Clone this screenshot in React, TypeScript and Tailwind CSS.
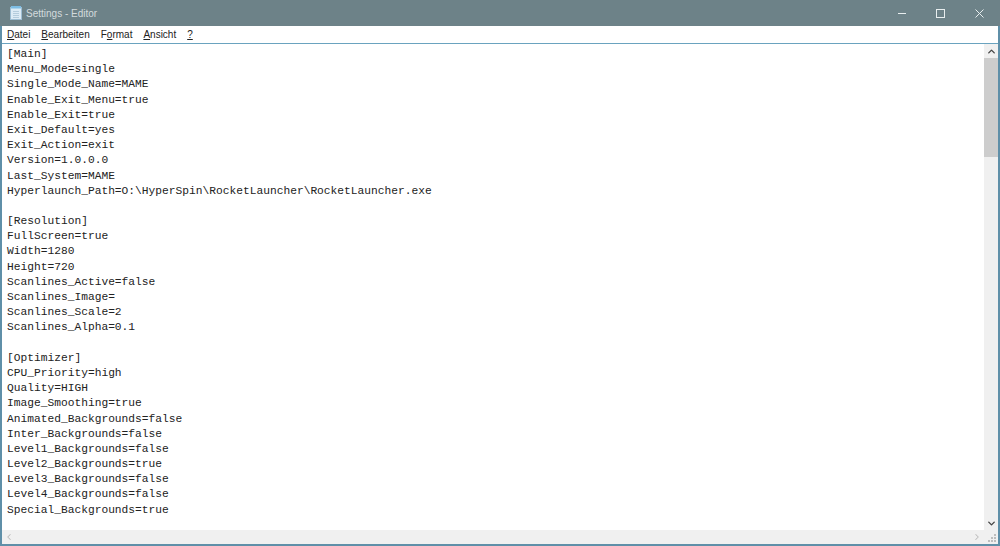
import { ChevronUp, ChevronDown, ChevronLeft, ChevronRight } from "lucide-react";

const lines = [
  "[Main]",
  "Menu_Mode=single",
  "Single_Mode_Name=MAME",
  "Enable_Exit_Menu=true",
  "Enable_Exit=true",
  "Exit_Default=yes",
  "Exit_Action=exit",
  "Version=1.0.0.0",
  "Last_System=MAME",
  "Hyperlaunch_Path=O:\\HyperSpin\\RocketLauncher\\RocketLauncher.exe",
  "",
  "[Resolution]",
  "FullScreen=true",
  "Width=1280",
  "Height=720",
  "Scanlines_Active=false",
  "Scanlines_Image=",
  "Scanlines_Scale=2",
  "Scanlines_Alpha=0.1",
  "",
  "[Optimizer]",
  "CPU_Priority=high",
  "Quality=HIGH",
  "Image_Smoothing=true",
  "Animated_Backgrounds=false",
  "Inter_Backgrounds=false",
  "Level1_Backgrounds=false",
  "Level2_Backgrounds=true",
  "Level3_Backgrounds=false",
  "Level4_Backgrounds=false",
  "Special_Backgrounds=true",
];

const menus = [
  { key: "D", rest: "atei", pre: "" },
  { key: "B", rest: "earbeiten", pre: "" },
  { key: "o", rest: "rmat", pre: "F" },
  { key: "A", rest: "nsicht", pre: "" },
  { key: "?", rest: "", pre: "" },
];

function NotepadIcon() {
  return (
    <svg width="16" height="16" viewBox="0 0 16 16" className="shrink-0">
      <rect x="2.5" y="2.5" width="11" height="12" fill="#dcebf5" stroke="#9dbdd2" strokeWidth="1" />
      <rect x="3" y="1" width="10" height="2.5" fill="#7dbde4" />
      <path d="M5 6.5h6M5 8.5h6M5 10.5h6M5 12.5h6" stroke="#b4ccdc" strokeWidth="1" />
    </svg>
  );
}

export default function App() {
  return (
    <div className="w-[1000px] h-[546px] flex flex-col overflow-hidden bg-[#5f8fa8] px-[2px] pb-[2px]">
      {/* Title bar */}
      <div className="-mx-[2px] h-[26px] shrink-0 flex items-center bg-[#6d8288] pl-[8px] pr-[1px] text-[#d3dbdd] font-['Liberation_Sans',sans-serif] text-[10px]">
        <NotepadIcon />
        <span className="ml-[2px]">Settings - Editor</span>
        <div className="ml-auto flex h-full">
          <div className="w-[39px] flex items-center justify-center">
            <div className="w-[8px] h-[1px] bg-[#e8eeef]" />
          </div>
          <div className="w-[39px] flex items-center justify-center">
            <div className="w-[9px] h-[9px] border border-[#e8eeef]" />
          </div>
          <div className="w-[39px] flex items-center justify-center">
            <svg width="9" height="9" viewBox="0 0 9 9" stroke="#e8eeef" strokeWidth="1">
              <path d="M0.5 0.5l8 8M8.5 0.5l-8 8" />
            </svg>
          </div>
        </div>
      </div>

      {/* Menu bar */}
      <div className="h-[18px] shrink-0 flex items-center bg-white pl-[5px] gap-[11px] border-b border-[#6aa3bf] font-['Liberation_Sans',sans-serif] text-[10px] text-[#222]">
        {menus.map((m) => (
          <span key={m.key}>
            {m.pre}
            <span className="underline">{m.key}</span>
            {m.rest}
          </span>
        ))}
      </div>

      {/* Text area */}
      <div className="flex-1 min-h-0 flex bg-white">
        <div className="flex-1 pl-[5px] pt-[3px] font-['Liberation_Mono',monospace] text-[11.24px] leading-[15.2px] text-[#222] whitespace-pre overflow-hidden">
          {lines.map((l, i) => (
            <div key={i} className="h-[15.2px]">{l}</div>
          ))}
        </div>
        {/* Vertical scrollbar */}
        <div className="w-[14px] flex flex-col bg-[#f0f0f0]">
          <div className="h-[14px] flex items-center justify-center">
            <ChevronUp size={11} strokeWidth={3} color="#444" />
          </div>
          <div className="h-[99px] bg-[#cdcdcd]" />
          <div className="flex-1" />
          <div className="h-[14px] flex items-center justify-center">
            <ChevronDown size={11} strokeWidth={3} color="#444" />
          </div>
        </div>
      </div>

      {/* Horizontal scrollbar */}
      <div className="h-[14px] shrink-0 flex items-center bg-[#f0f0f0]">
        <div className="w-[14px] flex justify-center">
          <ChevronLeft size={10} strokeWidth={2.5} color="#bdbdbd" />
        </div>
        <div className="flex-1" />
        <div className="w-[14px] flex justify-center">
          <ChevronRight size={10} strokeWidth={2.5} color="#bdbdbd" />
        </div>
        <div className="w-[14px] h-full flex items-end justify-end p-[2px]">
          <svg width="9" height="9" viewBox="0 0 9 9" fill="#bdbdbd">
            <rect x="7" y="1" width="2" height="2" />
            <rect x="4" y="4" width="2" height="2" />
            <rect x="7" y="4" width="2" height="2" />
            <rect x="1" y="7" width="2" height="2" />
            <rect x="4" y="7" width="2" height="2" />
            <rect x="7" y="7" width="2" height="2" />
          </svg>
        </div>
      </div>
    </div>
  );
}
